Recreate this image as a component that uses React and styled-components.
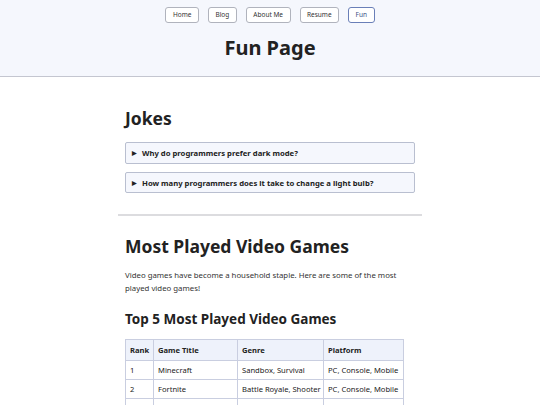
import React from "react";
import styled, { createGlobalStyle } from "styled-components";

const Global = createGlobalStyle`
  html, body { margin: 0; padding: 0; background: #ffffff; }
  body { font-family: "Noto Sans", "Open Sans", sans-serif; color: #222; }
`;

const Header = styled.header`
  background: #f5f7fd;
  border-bottom: 1px solid #c4c6d0;
  padding: 7px 0 15px;
  display: flex;
  flex-direction: column;
  align-items: center;
`;

const Nav = styled.nav`
  display: flex;
  gap: 9px;
  justify-content: center;
`;

const NavButton = styled.a`
  font-size: 6.5px;
  line-height: 14px;
  padding: 0 6.5px;
  border: 1px solid ${(p) => (p.$active ? "#6a7fb8" : "#b0b3bd")};
  color: ${(p) => (p.$active ? "#3d5285" : "#333")};
  background: #fff;
  border-radius: 3px;
  text-decoration: none;
`;

const Title = styled.h1`
  margin: 11px 0 0;
  font-size: 20px;
  line-height: 27px;
  font-weight: 700;
  color: #222;
`;

const Main = styled.main`
  width: 304px;
  margin: 0 auto;
  padding-top: 29px;
`;

const Section = styled.section`
  padding: 0 7px;
`;

const H2 = styled.h2`
  margin: 0 0 ${(p) => p.$mb || 12}px;
  font-size: 17.5px;
  line-height: 24px;
  font-weight: 700;
  color: #222;
`;

const H3 = styled.h3`
  margin: 0 0 10px;
  font-size: 13.5px;
  line-height: 19px;
  font-weight: 700;
  color: #222;
`;

const Jokes = styled.div`
  display: flex;
  flex-direction: column;
  gap: 8px;
`;

const Joke = styled.details`
  background: #f5f7fd;
  border: 1px solid #b9bfd0;
  border-radius: 2px;
  padding: 5px 6px 4.5px;
  font-size: 7.7px;
  line-height: 10px;
`;

const Summary = styled.summary`
  font-weight: 700;
  cursor: pointer;
  color: #222;
  list-style: none;
  &::-webkit-details-marker { display: none; }
  &::before {
    content: "▶";
    font-size: 5.5px;
    display: inline-block;
    width: 10px;
    vertical-align: 1px;
  }
`;

const Rule = styled.hr`
  border: none;
  border-top: 2px solid #dcdcdf;
  margin: 21px 0 18px;
`;

const Para = styled.p`
  margin: 0 0 15px;
  font-size: 7.8px;
  line-height: 13px;
  color: #333;
`;

const Table = styled.table`
  width: 279px;
  border-collapse: collapse;
  table-layout: fixed;
  font-size: 7.6px;
  line-height: 10px;
  color: #222;
`;

const Th = styled.th`
  width: ${(p) => (p.$w ? `${p.$w}px` : "auto")};
  background: #eef2fb;
  border: 1px solid #c9cee0;
  text-align: left;
  font-weight: 700;
  padding: 5px 4px;
`;

const Td = styled.td`
  border: 1px solid #c9cee0;
  padding: 4px 4px;
  white-space: nowrap;
  overflow: hidden;
`;

const games = [
  ["1", "Minecraft", "Sandbox, Survival", "PC, Console, Mobile"],
  ["2", "Fortnite", "Battle Royale, Shooter", "PC, Console, Mobile"],
  ["3", "Apex Legends", "Battle Royale, Shooter", "PC, Console"],
  ["4", "League of Legends", "MOBA", "PC"],
  ["5", "Grand Theft Auto V", "Action-Adventure", "PC, Console"],
];

export default function App() {
  return (
    <>
      <Global />
      <Header>
        <Nav>
          <NavButton>Home</NavButton>
          <NavButton>Blog</NavButton>
          <NavButton>About Me</NavButton>
          <NavButton>Resume</NavButton>
          <NavButton $active>Fun</NavButton>
        </Nav>
        <Title>Fun Page</Title>
      </Header>
      <Main>
        <Section>
          <H2>Jokes</H2>
          <Jokes>
            <Joke>
              <Summary>Why do programmers prefer dark mode?</Summary>
              Because light attracts bugs.
            </Joke>
            <Joke>
              <Summary>How many programmers does it take to change a light bulb?</Summary>
              None, that's a hardware problem.
            </Joke>
          </Jokes>
        </Section>
        <Rule />
        <Section>
          <H2 $mb={11}>Most Played Video Games</H2>
          <Para>
            Video games have become a household staple. Here are some of the most
            played video games!
          </Para>
          <H3>Top 5 Most Played Video Games</H3>
          <Table>
            <thead>
              <tr>
                <Th $w={19}>Rank</Th>
                <Th $w={75}>Game Title</Th>
                <Th $w={77}>Genre</Th>
                <Th>Platform</Th>
              </tr>
            </thead>
            <tbody>
              {games.map((g) => (
                <tr key={g[0]}>
                  {g.map((c, i) => (
                    <Td key={i}>{c}</Td>
                  ))}
                </tr>
              ))}
            </tbody>
          </Table>
        </Section>
      </Main>
    </>
  );
}
